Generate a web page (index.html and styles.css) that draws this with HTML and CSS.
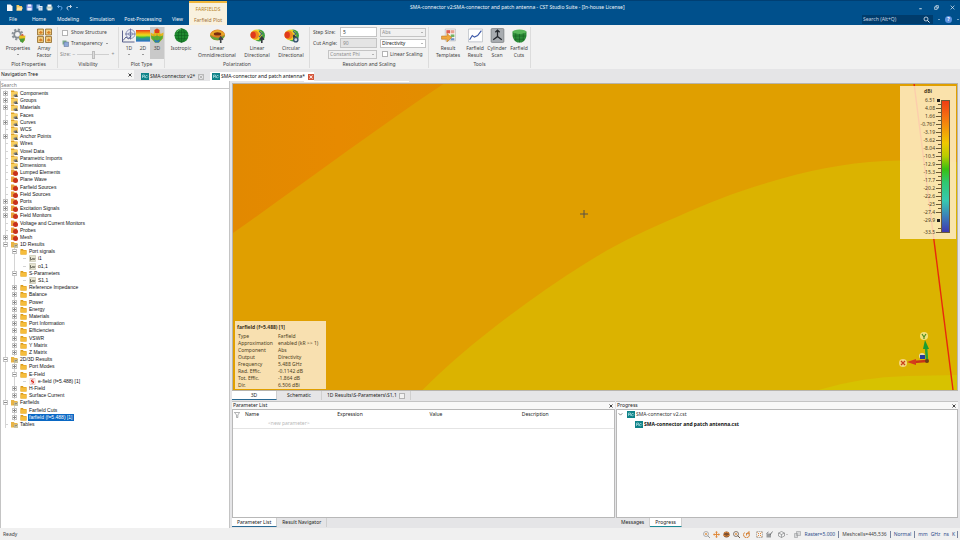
FILE: index.html
```html
<!DOCTYPE html>
<html lang="en">
<head>
<meta charset="utf-8">
<title>CST Studio Suite</title>
<link rel="stylesheet" href="styles.css">
</head>
<body>
<svg class="defs" aria-hidden="true">
  <defs>
    <linearGradient id="rainbow" x1="0" y1="0" x2="0" y2="1">
      <stop offset="0" stop-color="#e8381c"/><stop offset=".25" stop-color="#f5a010"/><stop offset=".45" stop-color="#e8e020"/><stop offset=".65" stop-color="#40c030"/><stop offset="1" stop-color="#2860c8"/>
    </linearGradient>
    <symbol id="folder" viewBox="0 0 14 14"><path d="M1 2h5l1 2h6v9H1z" fill="#d99a1c"/><path d="M1 5h12v8H1z" fill="#f6bd3c"/></symbol>
    <symbol id="folder-obj" viewBox="0 0 14 14"><path d="M0 1h6l1 2h6v10H0z" fill="#e0a224"/><path d="M0 4h13v9H0z" fill="#f8cf60"/><path d="M7 14l3-7 4 7z" fill="#555a60"/><circle cx="7" cy="11" r="2" fill="#7c8288"/></symbol>
    <symbol id="folder-red" viewBox="0 0 14 14"><path d="M0 1h6l1 2h5v9H0z" fill="#e8a13a"/><circle cx="9" cy="9" r="5" fill="#c8321c"/></symbol>
    <symbol id="folder-res" viewBox="0 0 14 14"><path d="M0 2h6l1 2h6v9H0z" fill="#e8b446"/><path d="M6 7h8v7H6z" fill="#c9c3a0"/><path d="M6 11l2-2 2 1 3-3" stroke="#555" fill="none"/></symbol>
    <symbol id="signal" viewBox="0 0 14 14"><path d="M1 1h12v12H1z" fill="#e4e2cf" stroke="#b9b79f"/><path d="M3 11V4m0 3l3 3 2-4 2 4 2-4" stroke="#45463a" stroke-width="1.3" fill="none"/></symbol>
    <symbol id="efield" viewBox="0 0 14 14"><path d="M2 1h10v12H2z" fill="#fff" stroke="#d8a8a8"/><path d="M9 4H5v3h4v3H5" stroke="#d82a20" stroke-width="2" fill="none"/></symbol>
    <symbol id="cst" viewBox="0 0 16 14"><path d="M0 0h16v14H0z" fill="#0f8288"/><path d="M3 10V4h4v3H3M7 10l3-5 3 0M8 8l3 2 3-3" stroke="#c8eef0" stroke-width="1.2" fill="none"/></symbol>
    <symbol id="gear" viewBox="0 0 28 28"><circle cx="12" cy="12" r="9" fill="none" stroke="#8d949a" stroke-width="4" stroke-dasharray="4 3"/><circle cx="12" cy="12" r="6" fill="#f2f2f2" stroke="#858c92" stroke-width="3"/><path d="M15 16l4-3 3 2 5-1-1 9-4 4-5-3z" fill="#e9c020"/><path d="M16 20l10-1-1 4-3 5-5-3z" fill="#4a9a3c"/><path d="M18 14l3-3 4 3z" fill="#df4820"/></symbol>
    <symbol id="array" viewBox="0 0 28 28"><g fill="#f4d184" stroke="#8a6322" stroke-width="1.5"><path d="M1 2h11v11H1zM16 2h11v11H16zM1 16h11v11H1zM16 16h11v11H16z"/></g><path d="M3 9l4-4 4 4-4 2zM18 9l4-4 4 4-4 2zM3 23l4-4 4 4-4 2zM18 23l4-4 4 4-4 2z" fill="#d6802a"/></symbol>
    <symbol id="plot1d" viewBox="0 0 28 28"><circle cx="17" cy="11" r="9" fill="#e9ecf5" stroke="#7078a4" stroke-width="1.5"/><circle cx="17" cy="11" r="4" fill="none" stroke="#7078a4"/><path d="M17 0v22M6 11h21" stroke="#5a6294" stroke-width="1.5"/><path d="M1 4v23h24M2 24l6-7 5 4 5-6" stroke="#41497c" stroke-width="1.7" fill="none"/></symbol>
    <symbol id="plot2d" viewBox="0 0 28 28"><path d="M0 3h28v23H0z" fill="url(#rainbow)"/><path d="M0 26V16c5-2 7 4 13 3s7-5 15-2v9z" fill="#2a80c8" opacity=".45"/></symbol>
    <symbol id="plot3d" viewBox="0 0 28 28"><path d="M1 8l6 3 2-8 5-3 5 3 2 8 6-3-1 12-8 8h-8l-8-8z" fill="#e8b41c"/><path d="M9 3l5-3 5 3-1 6h-8z" fill="#e03c1c"/><path d="M2 14l6 2 6-2 6 2 6-2-1 6-7 8h-8l-7-8z" fill="#54b03a"/><path d="M8 22l6 2 6-2-2 6h-8z" fill="#2a78b8"/><path d="M14 9v15M8 12v10M20 12v10" stroke="#7a8a20" stroke-width=".8"/></symbol>
    <symbol id="sphere" viewBox="0 0 28 28"><circle cx="14" cy="14" r="13" fill="#1f8a30"/><g fill="none" stroke="#0e5a1c"><ellipse cx="14" cy="14" rx="6" ry="13"/><path d="M14 1v26M1 14h26M3 8h22M3 20h22"/></g><path d="M5 8q4-6 9-6" stroke="#67c46c" stroke-width="1.5" fill="none"/></symbol>
    <symbol id="torus" viewBox="0 0 28 28"><ellipse cx="14" cy="13" rx="14" ry="10" fill="#e07820"/><path d="M0 12q14-17 28 0l-4 2H5z" fill="#e8a828"/><path d="M0 13q2 10 14 10t14-10q-6 5-14 5T0 13z" fill="#66a238"/><ellipse cx="14" cy="11" rx="7" ry="3" fill="#7c2c10"/><path d="M20 28V18m-3 4l3-5 4 5" stroke="#3e4348" stroke-width="3" fill="none"/></symbol>
    <symbol id="lobe" viewBox="0 0 28 28"><ellipse cx="17" cy="14" rx="11" ry="11" fill="#3f9e44"/><ellipse cx="12" cy="13" rx="11" ry="10" fill="#ecd428"/><ellipse cx="9" cy="13" rx="8" ry="8" fill="#ef8a20"/><ellipse cx="6" cy="13" rx="5" ry="6" fill="#e03a1c"/><path d="M17 6l5 5-5 6" stroke="#35608a" stroke-width="2" fill="none"/></symbol>
    <symbol id="arrow-up" viewBox="0 0 28 28"><path d="M22 28V18m-4 4l4-5 4 5" stroke="#33383e" stroke-width="3" fill="none"/></symbol>
    <symbol id="arrow-round" viewBox="0 0 28 28"><circle cx="22" cy="22" r="4" stroke="#33506e" stroke-width="2.5" fill="#cdd8e2"/><path d="M17 12l6 4-6 3z" fill="#33383e"/></symbol>
    <symbol id="templates" viewBox="0 0 28 28"><path d="M8 2h19v22H8z" fill="#fbfbfb" stroke="#a9a9a9"/><path d="M10 4h7v6h-7z" fill="#e06050"/><path d="M18 4h7v6h-7z" fill="#e8a090"/><path d="M18 12h7v5h-7z" fill="#74b060"/><path d="M18 19h7v4h-7z" fill="#6f90c4"/><path d="M1 15h10v-5l9 8-9 8v-5H1z" fill="#f0a83c" stroke="#b57118"/></symbol>
    <symbol id="chart" viewBox="0 0 28 28"><path d="M1 2h26v24H1z" fill="#fff" stroke="#a0a6b0"/><path d="M3 22l5-8 4 3 6-3 7-9" stroke="#3c58a8" stroke-width="2.2" fill="none"/><path d="M3 25h22" stroke="#c9ccd4"/></symbol>
    <symbol id="scan" viewBox="0 0 28 28"><rect x="2" y="1" width="24" height="26" rx="2" fill="#a8acb0" stroke="#606468"/><path d="M14 5v11l-8 6m8-6l8 6M10 8l4-4 4 4" stroke="#24282c" stroke-width="2.4" fill="none"/></symbol>
    <symbol id="bowl" viewBox="0 0 28 28"><path d="M1 7q13-5 26 0v8q-2 10-9 12h-8Q3 25 1 15z" fill="#2c8c38"/><ellipse cx="14" cy="7" rx="13" ry="4" fill="#58b65a"/><path d="M7 10v14M14 11v16M21 10v14M2 15h24M5 21h18" stroke="#14591f"/></symbol>
    <symbol id="doc-new" viewBox="0 0 14 14"><path d="M2 1h7l4 4v9H2z" fill="#f6f8fb"/></symbol>
    <symbol id="doc-open" viewBox="0 0 14 14"><path d="M1 2h5l1 2h5v9H1z" fill="#f4c860"/><path d="M3 7h11l-3 6H1z" fill="#ffe3a0"/></symbol>
    <symbol id="doc-save" viewBox="0 0 14 14"><path d="M1 1h12v12H1z" fill="#9aa4ec"/><path d="M4 1h6v4H4zM3 8h8v5H3z" fill="#f4f5ff"/></symbol>
    <symbol id="doc-copy" viewBox="0 0 14 14"><path d="M1 1h7v8H1z" fill="#86b2e0"/><path d="M5 4h8v9H5z" fill="#e8f0f8"/><path d="M7 7h4M7 10h4" stroke="#3c78b0"/></symbol>
    <symbol id="doc-print" viewBox="0 0 14 14"><path d="M3 1h8v5H3z" fill="#fff"/><path d="M1 5h12v6H1z" fill="#b6c8c0"/><path d="M3 9h8v4H3z" fill="#f0f4e8"/></symbol>
    <symbol id="undo" viewBox="0 0 14 14"><path d="M3 5h6q3 0 3 3t-3 4M6 2L3 5l3 3" stroke="#5fa2e4" stroke-width="2" fill="none"/></symbol>
    <symbol id="redo" viewBox="0 0 14 14"><path d="M11 5H5Q2 5 2 8t3 4M8 2l3 3-3 3" stroke="#c6d6e6" stroke-width="2" fill="none"/></symbol>
    <symbol id="lens" viewBox="0 0 14 14"><circle cx="6" cy="6" r="4" fill="none" stroke="currentColor" stroke-width="1.5"/><path d="M9 9l4 4" stroke="currentColor" stroke-width="2"/></symbol>
    <symbol id="lens-plus" viewBox="0 0 14 14"><circle cx="6" cy="6" r="5" fill="none" stroke="currentColor" stroke-width="1.5"/><path d="M9 9l5 5" stroke="currentColor" stroke-width="2"/><path d="M4 6h4M6 4v4" stroke="#e08020" stroke-width="1.5"/></symbol>
    <symbol id="pan" viewBox="0 0 14 14"><path d="M7 0l3 3H8v3h3V4l3 3-3 3V8H8v3h2l-3 3-3-3h2V8H3v2L0 7l3-3v2h3V3H4z" fill="#e08a3c"/></symbol>
    <symbol id="rotate" viewBox="0 0 14 14"><circle cx="7" cy="7" r="6" fill="#7d5032"/><path d="M0 8q7 5 14 0M2 4q5-3 10 0" stroke="#e08a3c" stroke-width="2" fill="none"/></symbol>
    <symbol id="spin" viewBox="0 0 14 14"><path d="M3 3a6 6 0 1 0 8 0M8 5l4-4v5zM7 4v5" stroke="#d6853c" stroke-width="2" fill="none"/></symbol>
    <symbol id="fit" viewBox="0 0 14 14"><path d="M1 1h12v12H1z" fill="none" stroke="#7d7468" stroke-dasharray="3 1"/><path d="M3 3l3 3M11 3L8 6M3 11l3-3M11 11L8 8" stroke="#e08a3c" stroke-width="2"/></symbol>
    <symbol id="plane" viewBox="0 0 14 14"><path d="M1 5h9v8H1z" fill="#9a9c9e"/><path d="M1 5l4-3M8 8l5-7" stroke="#5c5e60" stroke-width="1.5"/></symbol>
    <symbol id="cube" viewBox="0 0 14 14"><path d="M1 4l6-3 6 3v6l-6 3-6-3zM1 4l6 3 6-3M7 7v6" fill="none" stroke="#77797b" stroke-width="1.2"/></symbol>
    <symbol id="windows" viewBox="0 0 14 14"><path d="M5 1h8v8H5zM1 5h6v8H1z" fill="#d8d9da" stroke="#8c8e90"/></symbol>
    <symbol id="layers" viewBox="0 0 14 14"><path d="M1 1h8v8H1z" fill="#7fae8a"/><path d="M4 4h9v9H4z" fill="#8ea9d8" stroke="#56688c"/></symbol>
    <symbol id="funnel" viewBox="0 0 14 14"><path d="M1 1h12L9 7v6H6V7z" fill="none" stroke="#6c6e70" stroke-width="1.3"/></symbol>
    <symbol id="cross" viewBox="0 0 8 8"><path d="M1 1l6 6M7 1L1 7" stroke="currentColor" stroke-width="1.6"/></symbol>
  </defs>
</svg>

<div class="app">
  <header class="top">
    <div class="quick">
      <button aria-label="New"><svg><use href="#doc-new"/></svg></button>
      <button aria-label="Open"><svg><use href="#doc-open"/></svg></button>
      <button aria-label="Save"><svg><use href="#doc-save"/></svg></button>
      <button aria-label="Copy"><svg><use href="#doc-copy"/></svg></button>
      <button aria-label="Print"><svg><use href="#doc-print"/></svg></button>
      <button aria-label="Undo"><svg><use href="#undo"/></svg></button>
      <button aria-label="Redo"><svg><use href="#redo"/></svg></button>
      <button class="more" aria-label="More"><i class="caret"></i></button>
    </div>
    <nav class="menu">
      <a href="#" class="m-file">File</a><a href="#" class="m-home">Home</a><a href="#" class="m-model">Modeling</a><a href="#" class="m-sim">Simulation</a><a href="#" class="m-post">Post-Processing</a><a href="#" class="m-view">View</a>
    </nav>
    <a href="#" class="context-tab"><span>FARFIELDS</span><b>Farfield Plot</b></a>
    <div class="caption">SMA-connector v2:SMA-connector and patch antenna - CST Studio Suite - [In-house License]</div>
    <div class="win">
      <button aria-label="Minimize"><svg viewBox="0 0 8 8"><path d="M2 6h4" stroke="#fff" stroke-width="1.3"/></svg></button>
      <button aria-label="Restore"><svg viewBox="0 0 8 8"><path d="M1 3h4v4H1zM3 3V1h4v4H5" fill="none" stroke="#fff"/></svg></button>
      <button aria-label="Close"><svg viewBox="0 0 8 8"><path d="M1 1l6 6M7 1L1 7" stroke="#fff"/></svg></button>
    </div>
    <div class="find">
      <label class="find-box"><input type="text" placeholder="Search (Alt+Q)" aria-label="Search"><svg><use href="#lens"/></svg></label>
      <button aria-label="Collapse ribbon"><i class="caret up"></i></button>
      <button class="help" aria-label="Help">?</button>
      <button aria-label="Help menu"><i class="caret"></i></button>
    </div>
  </header>

  <section class="ribbon">
    <div class="group g-props">
      <div class="tools">
        <button class="tool w28"><svg><use href="#gear"/></svg><span>Properties</span><i class="caret"></i></button>
        <button class="tool w24"><svg><use href="#array"/></svg><span>Array<br>Factor</span></button>
      </div>
      <h2>Plot Properties</h2>
    </div>
    <div class="group g-vis">
      <div class="stack">
        <label class="check"><input type="checkbox">Show Structure</label>
        <button class="inline"><svg><use href="#layers"/></svg>Transparency<i class="caret"></i></button>
        <label class="size">Size:<span>−</span><input type="range" value="50"><span>+</span></label>
      </div>
      <h2>Visibility</h2>
    </div>
    <div class="group g-type">
      <div class="tools">
        <button class="tool w14"><svg><use href="#plot1d"/></svg><span>1D</span><i class="caret"></i></button>
        <button class="tool w14"><svg><use href="#plot2d"/></svg><span>2D</span><i class="caret"></i></button>
        <button class="tool w14 on"><svg><use href="#plot3d"/></svg><span>3D</span></button>
      </div>
      <h2>Plot Type</h2>
    </div>
    <div class="group g-pol">
      <div class="tools">
        <button class="tool w28"><svg><use href="#sphere"/></svg><span>Isotropic</span></button>
        <button class="tool w44"><svg><use href="#torus"/></svg><span>Linear<br>Omnidirectional</span></button>
        <button class="tool w36"><svg><use href="#lobe"/><use href="#arrow-up"/></svg><span>Linear<br>Directional</span></button>
        <button class="tool w32"><svg><use href="#lobe"/><use href="#arrow-round"/></svg><span>Circular<br>Directional</span></button>
      </div>
      <h2>Polarization</h2>
    </div>
    <div class="group g-res">
      <div class="fields">
        <label for="step">Step Size:</label><input id="step" type="text" value="5">
        <span class="pick off"><select aria-label="Component" disabled><option>Abs</option></select></span>
        <label for="cut">Cut Angle:</label><input id="cut" type="text" value="90" disabled>
        <span class="pick"><select aria-label="Quantity"><option>Directivity</option></select></span>
        <span class="pick off wide"><select aria-label="Cut type" disabled><option>Constant Phi</option></select></span>
        <label class="check"><input type="checkbox">Linear Scaling</label>
      </div>
      <h2>Resolution and Scaling</h2>
    </div>
    <div class="group g-tools">
      <div class="tools">
        <button class="tool w32"><svg><use href="#templates"/></svg><span>Result<br>Templates</span></button>
        <button class="tool w22"><svg><use href="#chart"/></svg><span>Farfield<br>Result</span></button>
        <button class="tool w22"><svg><use href="#scan"/></svg><span>Cylinder<br>Scan</span></button>
        <button class="tool w22"><svg><use href="#bowl"/></svg><span>Farfield<br>Cuts</span></button>
      </div>
      <h2>Tools</h2>
    </div>
  </section>

  <div class="strip">
    <div class="nav-title">Navigation Tree<button aria-label="Close navigation tree"><svg><use href="#cross"/></svg></button></div>
    <div class="doc"><svg class="logo"><use href="#cst"/></svg>SMA-connector v2*<button class="x" aria-label="Close tab"><svg><use href="#cross"/></svg></button></div>
    <div class="doc active"><svg class="logo"><use href="#cst"/></svg>SMA-connector and patch antenna*<button class="x red" aria-label="Close tab"><svg><use href="#cross"/></svg></button></div>
  </div>

  <div class="work">
    <aside class="side">
      <input class="search" type="text" placeholder="Search" aria-label="Search tree">
      <ul class="tree">
        <li><i class="exp plus"></i><svg><use href="#folder-obj"/></svg><span>Components</span></li>
        <li><i class="exp plus"></i><svg><use href="#folder-obj"/></svg><span>Groups</span></li>
        <li><i class="exp plus"></i><svg><use href="#folder-obj"/></svg><span>Materials</span></li>
        <li><i class="exp"></i><svg><use href="#folder-obj"/></svg><span>Faces</span></li>
        <li><i class="exp plus"></i><svg><use href="#folder-obj"/></svg><span>Curves</span></li>
        <li><i class="exp"></i><svg><use href="#folder-obj"/></svg><span>WCS</span></li>
        <li><i class="exp plus"></i><svg><use href="#folder-obj"/></svg><span>Anchor Points</span></li>
        <li><i class="exp"></i><svg><use href="#folder-obj"/></svg><span>Wires</span></li>
        <li><i class="exp"></i><svg><use href="#folder-obj"/></svg><span>Voxel Data</span></li>
        <li><i class="exp"></i><svg><use href="#folder-obj"/></svg><span>Parametric Imports</span></li>
        <li><i class="exp"></i><svg><use href="#folder-obj"/></svg><span>Dimensions</span></li>
        <li><i class="exp"></i><svg><use href="#folder-red"/></svg><span>Lumped Elements</span></li>
        <li><i class="exp"></i><svg><use href="#folder-red"/></svg><span>Plane Wave</span></li>
        <li><i class="exp"></i><svg><use href="#folder-red"/></svg><span>Farfield Sources</span></li>
        <li><i class="exp"></i><svg><use href="#folder-red"/></svg><span>Field Sources</span></li>
        <li><i class="exp plus"></i><svg><use href="#folder-red"/></svg><span>Ports</span></li>
        <li><i class="exp plus"></i><svg><use href="#folder-red"/></svg><span>Excitation Signals</span></li>
        <li><i class="exp plus"></i><svg><use href="#folder-red"/></svg><span>Field Monitors</span></li>
        <li><i class="exp"></i><svg><use href="#folder-red"/></svg><span>Voltage and Current Monitors</span></li>
        <li><i class="exp"></i><svg><use href="#folder-red"/></svg><span>Probes</span></li>
        <li><i class="exp plus"></i><svg><use href="#folder-red"/></svg><span>Mesh</span></li>
        <li><i class="exp minus"></i><svg><use href="#folder-res"/></svg><span>1D Results</span></li>
        <li class="l1"><i class="exp minus"></i><svg><use href="#folder"/></svg><span>Port signals</span></li>
        <li class="l2"><i class="exp"></i><svg><use href="#signal"/></svg><span>i1</span></li>
        <li class="l2"><i class="exp"></i><svg><use href="#signal"/></svg><span>o1,1</span></li>
        <li class="l1"><i class="exp minus"></i><svg><use href="#folder"/></svg><span>S-Parameters</span></li>
        <li class="l2"><i class="exp"></i><svg><use href="#signal"/></svg><span>S1,1</span></li>
        <li class="l1"><i class="exp plus"></i><svg><use href="#folder"/></svg><span>Reference Impedance</span></li>
        <li class="l1"><i class="exp plus"></i><svg><use href="#folder"/></svg><span>Balance</span></li>
        <li class="l1"><i class="exp plus"></i><svg><use href="#folder"/></svg><span>Power</span></li>
        <li class="l1"><i class="exp plus"></i><svg><use href="#folder"/></svg><span>Energy</span></li>
        <li class="l1"><i class="exp plus"></i><svg><use href="#folder"/></svg><span>Materials</span></li>
        <li class="l1"><i class="exp plus"></i><svg><use href="#folder"/></svg><span>Port Information</span></li>
        <li class="l1"><i class="exp plus"></i><svg><use href="#folder"/></svg><span>Efficiencies</span></li>
        <li class="l1"><i class="exp plus"></i><svg><use href="#folder"/></svg><span>VSWR</span></li>
        <li class="l1"><i class="exp plus"></i><svg><use href="#folder"/></svg><span>Y Matrix</span></li>
        <li class="l1"><i class="exp plus"></i><svg><use href="#folder"/></svg><span>Z Matrix</span></li>
        <li><i class="exp minus"></i><svg><use href="#folder-res"/></svg><span>2D/3D Results</span></li>
        <li class="l1"><i class="exp plus"></i><svg><use href="#folder"/></svg><span>Port Modes</span></li>
        <li class="l1"><i class="exp minus"></i><svg><use href="#folder"/></svg><span>E-Field</span></li>
        <li class="l2"><i class="exp"></i><svg><use href="#efield"/></svg><span>e-field (f=5.488) [1]</span></li>
        <li class="l1"><i class="exp plus"></i><svg><use href="#folder"/></svg><span>H-Field</span></li>
        <li class="l1"><i class="exp plus"></i><svg><use href="#folder"/></svg><span>Surface Current</span></li>
        <li><i class="exp minus"></i><svg><use href="#folder-res"/></svg><span>Farfields</span></li>
        <li class="l1"><i class="exp plus"></i><svg><use href="#folder"/></svg><span>Farfield Cuts</span></li>
        <li class="l1 sel"><i class="exp plus"></i><svg><use href="#folder"/></svg><span>farfield (f=5.488) [1]</span></li>
        <li><i class="exp"></i><svg><use href="#folder-res"/></svg><span>Tables</span></li>
      </ul>
    </aside>

    <main class="main">
      <div class="view">
        <svg class="scene" viewBox="0 0 726 306" preserveAspectRatio="none">
          <defs>
            <linearGradient id="hot" x1="0" y1="0" x2="1" y2="0"><stop offset="0" stop-color="#e28900"/><stop offset=".5" stop-color="#e78a00"/><stop offset="1" stop-color="#e28e00"/></linearGradient>
          </defs>
          <path d="M0 0h726v306H0z" fill="#e09f00"/>
          <path d="M0 0h211C140 47 66 103 0 149z" fill="url(#hot)"/>
          <path d="M190 306C212 284 233 266 256 248C288 223 320 200 354 179C384 160 414 146 445 133C474 120 504 108 535 99C574 87 613 79 653 77Q690 75 726 78V306z" fill="#dbb300"/>
          <path d="M587 306Q630 293 676 292L726 291V306z" fill="#d7c200"/>
          <path d="M683 0L722 306" stroke="#e8280c" stroke-width="1.4"/>
          <path d="M352 126v8M348 130h8" stroke="#54504a" stroke-width="1"/>
        </svg>
        <table class="info">
          <caption>farfield (f=5.488) [1]</caption>
          <tr><th>Type</th><td>Farfield</td></tr>
          <tr><th>Approximation</th><td>enabled (kR &gt;&gt; 1)</td></tr>
          <tr><th>Component</th><td>Abs</td></tr>
          <tr><th>Output</th><td>Directivity</td></tr>
          <tr><th>Frequency</th><td>5.488 GHz</td></tr>
          <tr><th>Rad. Effic.</th><td>-0.1142 dB</td></tr>
          <tr><th>Tot. Effic.</th><td>-1.864 dB</td></tr>
          <tr><th>Dir.</th><td>6.506 dBi</td></tr>
        </table>
        <div class="legend">
          <h3>dBi</h3>
          <div class="scale">
            <ol><li class="mark">6.51</li><li>4.08</li><li>1.66</li><li>-0.767</li><li>-3.19</li><li>-5.62</li><li>-8.04</li><li>-10.5</li><li>-12.9</li><li>-15.3</li><li>-17.7</li><li>-20.2</li><li>-22.6</li><li>-25</li><li>-27.4</li><li class="mark">-29.9</li><li class="last">-33.5</li></ol>
            <div class="bar"></div>
          </div>
        </div>
        <svg class="axes" viewBox="0 0 36 40">
          <circle cx="6" cy="33" r="4" fill="#f5d67c"/><circle cx="27" cy="6" r="4" fill="#f0e07c"/>
          <path d="M4 31l4 4M8 31l-4 4" stroke="#c8401c" stroke-width="1.2"/>
          <path d="M25 4l2 3 2-3M27 7v2" stroke="#4c8c20" stroke-width="1.2" fill="none"/>
          <circle cx="25" cy="26" r="3" fill="#e6dcb0"/><path d="M23 25h5v4h-5z" fill="#283c98"/>
          <path d="M30 30L29 17" stroke="#28a038" stroke-width="2.5"/><path d="M26 19l2-9 4 9z" fill="#1c9c30"/>
          <path d="M30 31l-14 1" stroke="#c83418" stroke-width="2.5"/><path d="M19 29l-9 3 9 3z" fill="#d43c1c"/><circle cx="30" cy="31" r="2" fill="#6c3c18"/>
        </svg>
      </div>

      <div class="tabs view-tabs">
        <button class="active">3D</button><button>Schematic</button><button class="long">1D Results\S-Parameters\S1,1<i></i></button>
      </div>

      <div class="panels">
        <section class="panel params">
          <h2>Parameter List<button aria-label="Close parameter list"><svg><use href="#cross"/></svg></button></h2>
          <div class="body">
            <table>
              <thead><tr><th class="fun"><svg><use href="#funnel"/></svg></th><th>Name</th><th>Expression</th><th>Value</th><th>Description</th></tr></thead>
              <tbody><tr><td></td><td class="new">&lt;new parameter&gt;</td><td></td><td></td><td></td></tr></tbody>
            </table>
          </div>
          <div class="tabs"><button class="active">Parameter List</button><button>Result Navigator</button></div>
        </section>
        <section class="panel progress">
          <h2>Progress<button aria-label="Close progress"><svg><use href="#cross"/></svg></button></h2>
          <ul class="body jobs">
            <li><svg class="chev" viewBox="0 0 8 8"><path d="M1 2l3 3 3-3" fill="none" stroke="#444"/></svg><svg class="logo"><use href="#cst"/></svg>SMA-connector v2.cst</li>
            <li class="child"><svg class="logo"><use href="#cst"/></svg>SMA-connector and patch antenna.cst</li>
          </ul>
          <div class="tabs"><button>Messages</button><button class="active">Progress</button></div>
        </section>
      </div>
    </main>
  </div>

  <footer class="status">
    <span class="ready">Ready</span>
    <div class="st-tools">
      <button aria-label="Zoom"><svg><use href="#lens-plus"/></svg></button>
      <button aria-label="Pan"><svg><use href="#pan"/></svg></button>
      <button aria-label="Rotate"><svg><use href="#rotate"/></svg></button>
      <button aria-label="Zoom in"><svg class="dark"><use href="#lens-plus"/></svg></button>
      <button aria-label="Spin"><svg><use href="#spin"/></svg></button>
      <button class="sep" aria-label="Fit"><svg><use href="#fit"/></svg></button>
      <button aria-label="Plane"><svg><use href="#plane"/></svg></button>
      <button class="cube" aria-label="View cube"><svg><use href="#cube"/></svg><i class="caret"></i></button>
      <button aria-label="Windows"><svg><use href="#windows"/></svg></button>
    </div>
    <span class="st blue">Raster=5.000</span><span class="st">Meshcells=445,536</span><span class="st blue">Normal</span><span class="st blue units"><span>mm</span><span>GHz</span><span>ns</span><span>K</span></span>
  </footer>
</div>
</body>
</html>
```
FILE: styles.css
```css
* { box-sizing: border-box; }
html, body { margin: 0; height: 100%; }
body { font: 5px/7px "Noto Sans", "Open Sans", sans-serif; color: #333; background: #f0f0f0; overflow: hidden; }
button, input, select { font: inherit; color: inherit; margin: 0; padding: 0; border: 0; background: none; }
button { display: inline-flex; align-items: center; justify-content: center; }
h2, h3, ul, ol { margin: 0; padding: 0; list-style: none; font-weight: normal; font-size: inherit; }
a { color: inherit; text-decoration: none; }
svg { display: block; flex: none; }
.defs { position: absolute; width: 0; height: 0; }
.caret { display: block; border: 1px solid transparent; border-top-color: currentColor; border-bottom: 0; width: 2px; }
.caret.up { border: 1px solid transparent; border-bottom-color: currentColor; border-top: 0; }
.logo { width: 8px; height: 7px; }

.app { display: flex; flex-direction: column; min-height: 100vh; }

/* title bar and menu */
.top { display: grid; grid-template-columns: 189px 38px 1fr 98px; grid-template-rows: 12px 12px; background: #00508c; color: #f0f6fb; border-top: 1px solid #003f73; }
.quick { display: flex; align-items: center; gap: 4px; padding-left: 6px; }
.quick svg { width: 7px; height: 7px; }
.quick button { width: 6px; }
.quick .more { width: 2px; }
.menu { grid-row: 2; display: flex; align-items: center; }
.menu a { text-align: center; }
.m-file { width: 26px; }
.m-home { width: 26px; }
.m-model { width: 32px; }
.m-sim { width: 36px; }
.m-post { width: 46px; }
.m-view { width: 23px; }
.context-tab { grid-column: 2; grid-row: 1 / 3; background: #f9f1de; border-top: 2px solid #f0b63c; color: #b5812a; text-align: center; display: flex; flex-direction: column; justify-content: space-between; padding: 3px 0 1px; }
.context-tab b { font-weight: normal; color: #a4723a; }
.caption { grid-column: 3; grid-row: 1; padding-left: 183px; align-self: center; white-space: nowrap; }
.win { grid-column: 4; grid-row: 1; display: flex; align-items: center; justify-content: flex-end; gap: 11px; padding-right: 5px; }
.win svg { width: 5px; height: 5px; }
.find { grid-column: 4; grid-row: 2; display: flex; align-items: center; gap: 5px; }
.find-box { display: flex; align-items: center; background: #003c6c; width: 71px; height: 9px; padding: 0 3px 0 1px; }
.find-box input { width: 60px; flex: 1; }
.find-box input::placeholder { color: #c4d4e2; opacity: 1; }
.find-box svg { width: 7px; height: 7px; }
.find .help { width: 7px; height: 7px; border-radius: 4px; background: #5b92e0; color: #fff; font-weight: bold; }

/* ribbon */
.ribbon { display: flex; background: #f1f1f1; padding: 2px 0 1px; color: #444; }
.group { display: flex; flex-direction: column; border-right: 1px solid #dcdcdc; height: 41px; }
.group h2 { text-align: center; margin-top: auto; }
.g-props { width: 58px; }
.g-vis { width: 61px; }
.g-type { width: 46px; }
.g-pol { width: 145px; }
.g-res { width: 119px; }
.g-tools { width: 102px; }
.tools { display: flex; padding-left: 2px; height: 32px; }
.g-props .tools { padding-left: 4px; }
.g-type .tools, .g-tools .tools { padding-left: 3px; }
.tool { flex-direction: column; justify-content: flex-start; padding-top: 1px; white-space: nowrap; text-align: center; }
.tool svg { width: 15px; height: 15px; margin-bottom: 2px; }
.tool .caret { margin-top: 2px; }
.g-type .tool svg { width: 14px; }
.tool.on { background: #c9c9c9; }
.w14 { width: 14px; } .w22 { width: 22px; } .w24 { width: 24px; } .w28 { width: 28px; }
.w32 { width: 32px; } .w36 { width: 36px; } .w44 { width: 44px; }
.stack { display: flex; flex-direction: column; align-items: flex-start; gap: 4px; padding: 2px 3px 0 4px; white-space: nowrap; }
.check { display: flex; align-items: center; gap: 3px; white-space: nowrap; }
.check input { appearance: none; width: 6px; height: 6px; border: 1px solid #b4b4b4; background: #fff; }
.inline { gap: 2px; }
.inline svg { width: 7px; height: 7px; }
.inline .caret { margin-left: 1px; }
.size { display: flex; align-items: center; gap: 2px; color: #888; margin-left: -2px; }
.size input { appearance: none; width: 32px; height: 1px; background: #cfcfcf; }
.size input::-webkit-slider-thumb { appearance: none; width: 3px; height: 8px; background: #dcdcdc; border: 1px solid #bdbdbd; }
.fields { display: grid; grid-template-columns: 26px 37px 48px; grid-auto-rows: 10px; column-gap: 1px; row-gap: 1px; padding: 0 3px; align-items: center; white-space: nowrap; }
.fields > input { width: 37px; height: 10px; border: 1px solid #c4c4c4; background: #fff; padding-left: 2px; color: #333; }
.fields > input:disabled { background: #e4e4e4; color: #8c8c8c; }
.pick { position: relative; margin-left: 2px; }
.pick select { display: block; appearance: none; width: 100%; height: 9px; border: 1px solid #c4c4c4; background: #fff; padding-left: 1px; color: #222; opacity: 1; }
.pick.off select { background: #f0f0f0; color: #8f8f8f; }
.pick::after { content: ""; position: absolute; right: 3px; top: 4px; border: 1px solid transparent; border-top-color: #777; border-bottom: 0; }
.pick.wide { grid-column: 1 / 3; margin-left: 15px; }
.fields .check { margin-left: 4px; gap: 2px; }

/* document tab strip */
.strip { display: flex; align-items: flex-end; background: #e5e5e7; height: 12px; }
.nav-title { width: 134px; height: 9px; background: #f6f6f6; color: #111; display: flex; align-items: center; align-self: flex-start; justify-content: space-between; padding: 0 2px 0 1px; margin: 1px 7px 0 0; }
.nav-title svg, .panel h2 svg { width: 4px; height: 4px; color: #111; }
.doc { display: flex; align-items: center; gap: 1px; height: 9px; color: #222; width: 69px; white-space: nowrap; }
.doc .x { width: 6px; height: 6px; border: 1px solid #b9b9b9; margin-left: 2px; color: #aaa; }
.doc .x svg { width: 4px; height: 4px; }
.doc.active { background: #fff; width: 104px; padding-left: 2px; color: #111; }
.doc .x.red { background: #e0664c; border-color: #d0563c; color: #fff; }

/* working area */
.work { display: flex; flex: 1; background: #e5e5e7; }
.side { width: 230px; background: #fff; border-right: 1px solid #c4c4c4; border-left: 1px solid #c4c4c4; }
.search { display: block; width: 100%; height: 8px; padding: 0; border-bottom: 1px solid #c8c8c8; background: #fff; }
.search::placeholder { color: #777; opacity: 1; }
.tree { display: grid; grid-auto-rows: 1fr; height: 338px; margin-top: 1px; font: 5px/7px "Liberation Sans", sans-serif; color: #111; background: linear-gradient(#d4d4d4, #d4d4d4) 4px 0 / 1px 100% no-repeat; }
.tree li { display: flex; align-items: center; white-space: nowrap; padding-left: 2px; }
.tree li.l1, .tree li.l2 { padding-left: 11px; background: linear-gradient(#d4d4d4, #d4d4d4) 13px 0 / 1px 100% no-repeat; }
.tree li.l2 { padding-left: 20px; }
.tree svg { width: 7px; height: 7px; margin: 0 1px 0 2px; }
.tree span { padding: 0 1px; }
.tree .sel span { background: #0a68c4; color: #fff; }
.exp { display: block; width: 5px; height: 5px; margin-right: 1px; background: linear-gradient(#d4d4d4, #d4d4d4) 2px 2px / 3px 1px no-repeat; }
.exp.plus, .exp.minus { border: 1px solid #c4c4c4; background: linear-gradient(#888, #888) 0 1px / 3px 1px no-repeat, #fff; }
.exp.plus { background: linear-gradient(#888, #888) 0 1px / 3px 1px no-repeat, linear-gradient(#888, #888) 1px 0 / 1px 3px no-repeat, #fff; }

.main { flex: 1; min-width: 0; display: flex; flex-direction: column; padding: 2px 2px 0 2px; background: linear-gradient(#fff, #fff) 74px 0 / 105px 1px no-repeat; }
.view { position: relative; flex: 1; border: 1px solid #b8b4ac; min-height: 200px; }
.scene { position: absolute; inset: 0; width: 100%; height: 100%; }
.info { position: absolute; left: 2px; bottom: 1px; width: 91px; background: #f8e0b0; color: #4c3f22; border-collapse: collapse; font-size: 5px; line-height: 7px; }
.info caption { background: #f8e0b0; text-align: left; font-weight: bold; line-height: 10px; padding: 1px 0 1px 2px; color: #3c3018; white-space: nowrap; }
.info th, .info td { padding: 0; font-weight: normal; text-align: left; white-space: nowrap; }
.info th { width: 43px; padding-left: 3px; }
.legend { position: absolute; top: 2px; right: 1px; width: 56px; height: 153px; background: rgba(255, 238, 204, 0.84); color: #4c3c20; }
.legend h3 { text-align: center; font-weight: bold; line-height: 10px; }
.scale { display: flex; gap: 0; }
.legend ol { width: 41px; text-align: right; line-height: 8px; }
.legend li { height: 8px; padding-right: 6px; background: linear-gradient(#6c5a34, #6c5a34) 36px 4px / 5px 1px no-repeat, linear-gradient(#6c5a34, #6c5a34) 38px 0 / 3px 1px no-repeat; }
.legend li.mark { background: linear-gradient(#222, #222) 37px 3px / 3px 3px no-repeat; }
.legend li.last { margin-top: 4px; }
.bar { width: 9px; height: 133px; margin-top: 4px; border: 1px solid #6b5a3a; background: linear-gradient(#f03c14, #f47010 12%, #f0c800 32%, #b8cc00 42%, #38c010 52%, #30c870 62%, #38c8b0 76%, #3c80b8 88%, #4038b0); }
.axes { position: absolute; right: 24px; bottom: 20px; width: 36px; height: 40px; }

.tabs { display: flex; height: 10px; }
.tabs button { padding: 0 5px; color: #222; height: 9px; border-right: 1px solid #cfcfcf; white-space: nowrap; }
.tabs button.active { background: #fff; border-bottom: 1px solid #2a6a94; }
.view-tabs button { width: 45px; }
.view-tabs .long { width: auto; gap: 2px; }
.view-tabs i { flex: none; width: 6px; height: 6px; border: 1px solid #b4b4b4; background: #f2f2f2; }

.panels { display: grid; grid-template-columns: 383fr 342fr; gap: 1px; height: 127px; }
.panel { display: flex; flex-direction: column; min-width: 0; }
.panel h2 { display: flex; justify-content: space-between; align-items: center; height: 8px; background: #f8f8f8; color: #222; padding: 0 2px 0 1px; border-top: 1px solid #c4c4c4; }
.panel .body { flex: 1; background: #fff; border: 1px solid #b8b8b8; }
.panel table { width: 100%; table-layout: fixed; border-collapse: collapse; font-size: 5px; line-height: 7px; }
.panel th { text-align: left; font-weight: normal; height: 9px; padding: 0; color: #222; }
.panel .fun { width: 12px; padding-left: 1px; }
.fun svg { width: 6px; height: 6px; }
.panel td { height: 9px; padding: 0; border-bottom: 1px solid #e4e4e4; }
.panel .new { color: #b8b8b8; padding-left: 23px; white-space: nowrap; }
.jobs li { display: flex; align-items: center; height: 10px; gap: 1px; padding-left: 1px; color: #333; }
.jobs li:first-child { height: 9px; }
.jobs .child { padding-left: 18px; font-weight: bold; color: #111; }
.jobs .chev { width: 5px; height: 5px; margin-right: 3px; }
.progress .tabs button.active { border-bottom-color: #1a8a96; }

/* status bar */
.status { display: flex; align-items: center; height: 12px; background: #f0f0f0; padding: 0 2px 0 3px; color: #444; }
.ready { margin-right: auto; }
.st-tools { display: flex; align-items: center; gap: 3px; margin-right: 1px; color: #999; }
.st-tools svg { width: 7px; height: 7px; }
.st-tools .dark { color: #6a5a4c; }
.st-tools .sep { margin-left: 3px; }
.st-tools .cube { gap: 1px; margin: 0 3px 0 2px; }
.st { padding: 0 3px; border-right: 1px solid #7884a0; }
.st.blue { color: #2e4c8c; }
.units { display: flex; gap: 3px; padding-right: 2px; }
```
